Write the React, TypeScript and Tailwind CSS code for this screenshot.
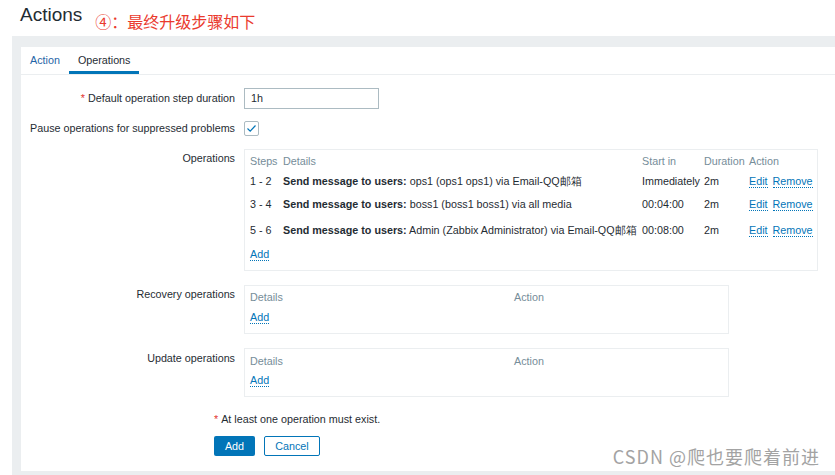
import React from "react";

const font = { fontFamily: '"Liberation Sans", Arial, sans-serif' };

function Link({ children }: { children: React.ReactNode }) {
  return (
    <span className="text-[#0275b8] border-b border-dotted border-[#0275b8] leading-[12px] inline-block">
      {children}
    </span>
  );
}

const ops = [
  { steps: "1 - 2", who: "ops1 (ops1 ops1) via Email-QQ邮箱", start: "Immediately", dur: "2m", h: "h-[19px]" },
  { steps: "3 - 4", who: "boss1 (boss1 boss1) via all media", start: "00:04:00", dur: "2m", h: "h-[27px]" },
  { steps: "5 - 6", who: "Admin (Zabbix Administrator) via Email-QQ邮箱", start: "00:08:00", dur: "2m", h: "h-[25px]" },
];

function Row({ label, required, children, className = "", labelClass = "items-center" }: {
  label: string;
  required?: boolean;
  children: React.ReactNode;
  className?: string;
  labelClass?: string;
}) {
  return (
    <div className={`flex ${className}`}>
      <div className={`w-[214px] flex justify-end ${labelClass}`}>
        {required && <span className="text-[#e33734] mr-[3px]">*</span>}
        <span>{label}</span>
      </div>
      <div className="ml-[9px]">{children}</div>
    </div>
  );
}

function EmptyOps({ headH, addH }: { headH: string; addH: string }) {
  return (
    <div className="w-[485px] h-[49px] border border-[#ebeef0] pl-[5px]">
      <div className={`flex ${headH} items-center text-[#768d99]`}>
        <div className="w-[264px]">Details</div>
        <div>Action</div>
      </div>
      <div className={`${addH} flex items-center`}>
        <Link>Add</Link>
      </div>
    </div>
  );
}

export default function App() {
  return (
    <div className="relative w-[835px] h-[475px] bg-white overflow-hidden text-[10.75px] leading-[13px] text-[#1f2c33]" style={font}>
      {/* header */}
      <div className="h-[36px] flex items-start">
        <h1 className="ml-[20px] mt-[3px] text-[19px] leading-[24px] text-[#1f2c33]">Actions</h1>
        <span
          className="ml-[13px] mt-[11px] text-[16px] leading-[20px] text-[#ea3a2e]"
          style={{ fontFamily: '"Noto Sans CJK SC", sans-serif' }}
        >
          ④：最终升级步骤如下
        </span>
      </div>

      {/* gray wrapper */}
      <div className="ml-[12px] h-[439px] bg-[#ebeef0] pt-[11px] pl-[9px]">
        <div className="bg-white h-[424px]">
          {/* tabs */}
          <div className="flex h-[28px] border-b border-[#ebeef0]">
            <div className="px-[9px] flex items-center text-[#1f65a6]">Action</div>
            <div className="px-[9px] flex items-center relative">
              Operations
              <div className="absolute left-0 right-0 bottom-[0px] h-[3px] bg-[#0275b8]" />
            </div>
          </div>

          <div className="pt-[13px]">
            <Row label="Default operation step duration" required>
              <div className="w-[135px] h-[21px] border border-[#acbbc2] flex items-center pl-[6px]">1h</div>
            </Row>

            <Row label="Pause operations for suppressed problems" className="mt-[12px]">
              <div className="w-[15px] h-[15px] border border-[#acbbc2] rounded-[2px] flex items-center justify-center">
                <svg width="11" height="9" viewBox="0 0 11 9">
                  <path d="M1.5 4.5 L4.2 7.2 L9.5 1.5" fill="none" stroke="#0275b8" strokeWidth="1.2" />
                </svg>
              </div>
            </Row>

            <Row label="Operations" className="mt-[13px]" labelClass="items-start pt-[3px]">
              <div className="w-[574px] h-[122px] border border-[#ebeef0] pl-[5px]">
                <div className="flex h-[22px] items-center text-[#768d99]">
                  <div className="w-[33px]">Steps</div>
                  <div className="w-[359px]">Details</div>
                  <div className="w-[62px]">Start in</div>
                  <div className="w-[45px]">Duration</div>
                  <div>Action</div>
                </div>
                {ops.map((o) => (
                  <div key={o.steps} className={`flex ${o.h} items-center whitespace-nowrap`}>
                    <div className="w-[33px]">{o.steps}</div>
                    <div className="w-[359px]">
                      <b>Send message to users:</b> {o.who}
                    </div>
                    <div className="w-[62px]">{o.start}</div>
                    <div className="w-[45px]">{o.dur}</div>
                    <div className="flex gap-[5px]">
                      <Link>Edit</Link>
                      <Link>Remove</Link>
                    </div>
                  </div>
                ))}
                <div className="h-[23px] flex items-center">
                  <Link>Add</Link>
                </div>
              </div>
            </Row>

            <Row label="Recovery operations" className="mt-[14px]" labelClass="items-start pt-[3px]">
              <EmptyOps headH="h-[22px]" addH="h-[18px]" />
            </Row>

            <Row label="Update operations" className="mt-[14px]" labelClass="items-start pt-[4px]">
              <EmptyOps headH="h-[24px]" addH="h-[14px]" />
            </Row>

            <div className="ml-[193px] mt-[15px] h-[14px] flex items-center">
              <span className="text-[#e33734] mr-[3px]">*</span>
              At least one operation must exist.
            </div>

            <div className="ml-[193px] mt-[10px] flex gap-[9px]">
              <button className="h-[20px] w-[41px] bg-[#0275b8] text-white rounded-[2px] text-[10.75px]">Add</button>
              <button className="h-[20px] w-[56px] border border-[#0275b8] text-[#0275b8] bg-white rounded-[2px] text-[10.75px]">
                Cancel
              </button>
            </div>
          </div>
        </div>
      </div>

      {/* watermark */}
      <div
        className="absolute right-[15px] bottom-[8px] text-[18px] leading-[22px] text-[#a3a3a3] tracking-[1px]"
        style={{ fontFamily: '"Noto Sans CJK SC", sans-serif' }}
      >
        CSDN @爬也要爬着前进
      </div>
    </div>
  );
}
